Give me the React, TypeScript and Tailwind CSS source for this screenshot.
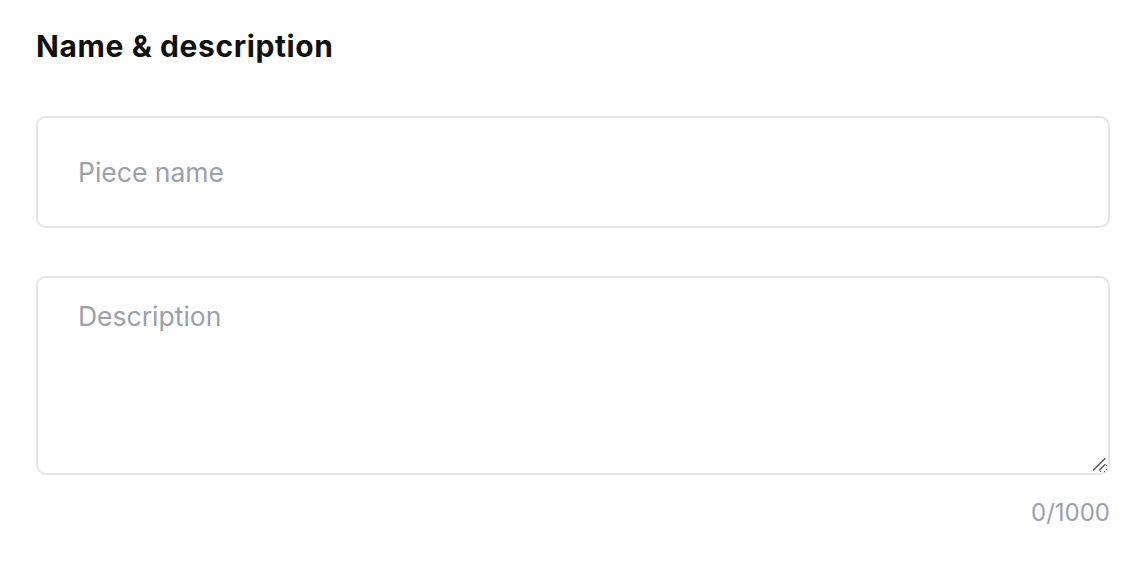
import React, { useState } from 'react';

const App = () => {
  const [name, setName] = useState('');
  const [description, setDescription] = useState('');

  return (
    <div className="min-h-[568px] w-full bg-white pl-9 pr-[26px] pt-[26px] font-['Inter',sans-serif]">
      <h2 className="text-[30px] font-bold leading-[40px] tracking-[0.02em] text-[#111111]">Name &amp; description</h2>

      <div className="mt-[50px] flex flex-col">
        <input
          type="text"
          placeholder="Piece name"
          value={name}
          onChange={(e) => setName(e.target.value)}
          className="h-[112px] w-full rounded-[10px] border-2 border-[#e5e5e8] bg-white px-10 text-[26.5px] text-[#111111] placeholder:text-[#9ca0ab] focus:outline-none"
        />

        <div className="relative mt-12">
          <textarea
            placeholder="Description"
            maxLength={1000}
            value={description}
            onChange={(e) => setDescription(e.target.value)}
            className="block h-[199px] w-full resize-y rounded-[10px] border-2 border-[#e5e5e8] bg-white px-10 pt-[17px] text-[26.5px] leading-[42px] text-[#111111] placeholder:text-[#9ca0ab] focus:outline-none"
          />
          {/* resize grip */}
          <svg
            className="pointer-events-none absolute bottom-[4px] right-[4px] h-[14px] w-[14px] bg-white"
            viewBox="0 0 14 14"
            fill="none"
            stroke="#4b4b4b"
            strokeWidth="1.3"
            strokeLinecap="round"
          >
            <path d="M1.5 13 L13 1.5" />
            <path d="M7.5 13 L13 7.5" />
          </svg>
        </div>

        <div className="mt-[23px] text-right text-[24px] leading-[30px] text-[#9ca0ab]">
          {description.length}/1000
        </div>
      </div>
    </div>
  );
};

export default App;
